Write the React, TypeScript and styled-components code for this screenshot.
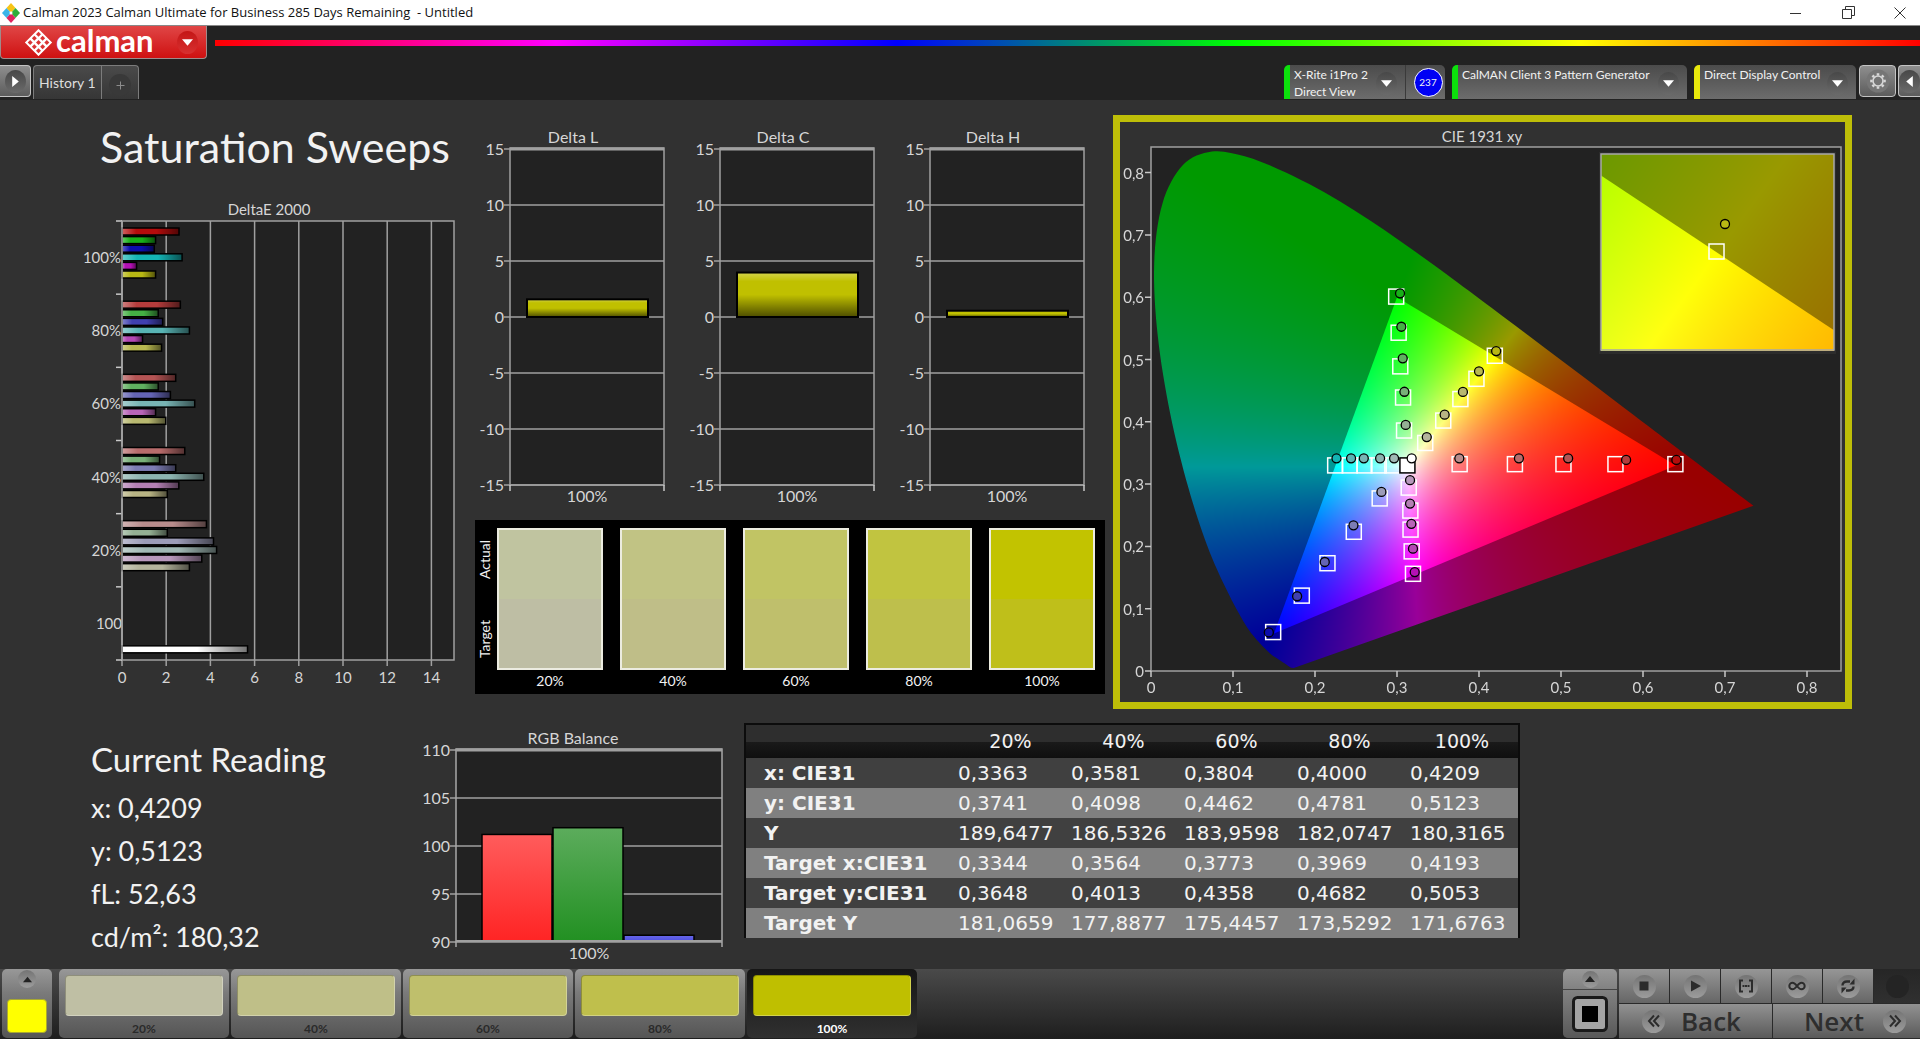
import React, { useLayoutEffect, useRef } from "react";
import styled, { createGlobalStyle, css } from "styled-components";

/* ------------------------------------------------------------------ */
/* Theme                                                               */
/* ------------------------------------------------------------------ */

const ui = '"Lato", "Open Sans", sans-serif';
const titleFont = '"Open Sans", "Noto Sans", sans-serif';
const wide = '"DejaVu Sans", "Noto Sans", sans-serif';

const GlobalStyle = createGlobalStyle`
  *, *::before, *::after { box-sizing: border-box; }
  body { margin: 0; background: #313131; font-family: ${ui}; }
  button { font: inherit; color: inherit; border: 0; padding: 0; margin: 0; cursor: pointer; }
  h1, h2, p { margin: 0; font-weight: 400; }
`;

const Page = styled.div`
  min-height: 100vh;
  display: flex;
  flex-direction: column;
  color: #f2f2f2;
  overflow-x: hidden;
`;

/* ------------------------------------------------------------------ */
/* Window title bar                                                    */
/* ------------------------------------------------------------------ */

const TitleBar = styled.header`
  height: 25px;
  flex: none;
  display: flex;
  align-items: center;
  gap: 3px;
  padding-left: 2px;
  background: #fff;
  color: #111;
  font: 13px/25px ${titleFont};
  white-space: pre;
`;

const WindowButtons = styled.div`
  margin: 0 -6px 0 auto;
  display: flex;
`;

const WindowButton = styled.button`
  width: 52px;
  height: 25px;
  display: grid;
  place-items: center;
  background: none;
`;

/* ------------------------------------------------------------------ */
/* Brand bar and tabs                                                  */
/* ------------------------------------------------------------------ */

const BrandBar = styled.div`
  height: 40px;
  flex: none;
  display: flex;
  align-items: flex-start;
  gap: 8px;
  background: #222;
  border-top: 1px solid #888;
`;

const BrandButton = styled.button`
  width: 207px;
  height: 33px;
  display: flex;
  align-items: center;
  padding: 0 8px 0 24px;
  gap: 4px;
  border: 1px solid #a08a8a;
  border-top: 0;
  border-radius: 0 0 4px 4px;
  background: linear-gradient(#e04646, #cf1111);
  color: #fff;
`;

const BrandName = styled.span`
  flex: 1;
  text-align: left;
  font-size: 31px;
  line-height: 28px;
  font-weight: 700;
  padding-bottom: 5px;
`;

const Rainbow = styled.div`
  flex: 1;
  height: 6px;
  margin-top: 14px;
  background: linear-gradient(90deg, #f00, #f0f 20%, #00f 40%, #0f0 60%, #ff0 80%, #f00);
`;

const RoundArrow = styled.span<{ $red?: boolean }>`
  width: 21px;
  height: 23px;
  flex: none;
  display: grid;
  place-items: center;
  border-radius: 50%;
  background: ${(p) => (p.$red ? "linear-gradient(#c41616, #d83030)" : "linear-gradient(#484848, #6a6a6a)")};
`;

const TabBar = styled.nav`
  height: 35px;
  flex: none;
  display: flex;
  align-items: flex-start;
  background: #222;
`;

const EdgeButton = styled.button<{ $width: number; $side?: "left" | "right" }>`
  width: ${(p) => p.$width}px;
  height: 32px;
  display: grid;
  place-items: center;
  border: 1px solid #c4c4c4;
  border-radius: 4px;
  background: linear-gradient(#8e8e8e, #5c5c5c);
  ${(p) => p.$side === "left" && css`border-left: 0; border-radius: 0 4px 4px 0;`}
  ${(p) => p.$side === "right" && css`border-right: 0; border-radius: 4px 0 0 4px;`}
`;

const Tabs = styled.div`
  display: flex;
  height: 34px;
  margin-left: 2px;
  border: 1px solid #7c7c7c;
  border-bottom: 0;
  border-radius: 4px 4px 0 0;
  background: linear-gradient(#4a4a4a, #363636);
  color: #dedede;
`;

const Tab = styled.button`
  padding: 0 5px;
  background: none;
  font-size: 14px;
  line-height: 34px;
`;

const AddTab = styled.button`
  width: 37px;
  display: grid;
  place-items: center;
  padding-top: 4px;
  border-left: 1px solid #7c7c7c;
  background: none;
`;

const Devices = styled.div`
  margin-left: auto;
  display: flex;
  align-items: flex-start;
  gap: 7px;
`;

const Device = styled.div<{ $width: number; $accent: string }>`
  width: ${(p) => p.$width}px;
  height: 34px;
  display: flex;
  border-left: 6px solid ${(p) => p.$accent};
  border-radius: 5px 5px 0 0;
  background: linear-gradient(#4b4b4b, #6c6c6c);
`;

const DeviceMenu = styled.button`
  flex: 1;
  display: flex;
  align-items: flex-start;
  justify-content: space-between;
  padding: 1px 8px 0 4px;
  background: none;
  text-align: left;
  font-size: 12px;
  line-height: 17px;
  white-space: nowrap;
`;

const ArrowSlot = styled.span`
  padding-top: 6px;
`;

const Reading = styled.div`
  width: 40px;
  display: grid;
  place-items: center;
  padding-left: 5px;
  border-left: 1px solid #3a3a3a;
`;

const ReadingBadge = styled.span`
  width: 29px;
  height: 29px;
  border: 1px solid #fff;
  border-radius: 50%;
  background: #0000f4;
  text-align: center;
  font-size: 10px;
  line-height: 27px;
`;

const EdgeGroup = styled.div`
  display: flex;
  gap: 2px;
  margin-left: -4px;
`;

/* ------------------------------------------------------------------ */
/* Work area                                                           */
/* ------------------------------------------------------------------ */

const Main = styled.main`
  flex: 1;
  background: #313131;
`;

const TopRow = styled.section`
  display: grid;
  grid-template-columns: 467fr 630fr 739fr 60fr;
  column-gap: 8px;
  align-items: start;
  padding-top: 15px;
`;

const BottomRow = styled.section`
  display: grid;
  grid-template-columns: 397fr 331fr 776fr 392fr;
  column-gap: 8px;
  align-items: start;
  padding-top: 14px;
`;

const PageTitle = styled.h1`
  padding: 7px 0 23px 100px;
  font-size: 43px;
  line-height: 50px;
  white-space: nowrap;
`;

const Plot = styled.svg<{ $text?: number }>`
  display: block;
  width: 100%;
  height: auto;
  fill: #d6d6d6;
  font-family: ${ui};
  font-size: ${(p) => p.$text ?? 16}px;
`;

const DeltaRow = styled.div`
  display: grid;
  grid-template-columns: repeat(3, 1fr);
`;

const SwatchPanel = styled.div`
  display: grid;
  grid-template-columns: 22px 1fr;
  margin-top: 12px;
  padding: 8px 10px 3px 0;
  background: #000;
`;

const SwatchSide = styled.div`
  display: flex;
  flex-direction: column;
  justify-content: space-between;
  align-items: center;
  height: 142px;
  padding: 12px 3px 12px 0;
  font-size: 14px;
  line-height: 16px;
`;

const SwatchList = styled.div`
  display: grid;
  grid-template-columns: repeat(5, 1fr);
  column-gap: 17px;
`;

const Vertical = styled.span`
  writing-mode: vertical-rl;
  transform: rotate(180deg);
`;

const Swatch = styled.figure`
  margin: 0;
  text-align: center;
  font-size: 14px;
  line-height: 21px;
`;

const SwatchColor = styled.div<{ $actual: string; $target: string }>`
  height: 142px;
  border: 2px solid #ecece0;
  background: linear-gradient(${(p) => p.$actual} 50%, ${(p) => p.$target} 50%);
`;

const CiePanel = styled.div`
  border: 7px solid #bebe08;
`;

const CurrentReading = styled.div`
  padding: 14px 0 0 91px;
  white-space: nowrap;
`;

const ReadingTitle = styled.h2`
  font-size: 33px;
  line-height: 44px;
  padding-bottom: 5px;
`;

const ReadingLine = styled.p`
  font-size: 27px;
  line-height: 43px;
`;

const Table = styled.table`
  width: 100%;
  table-layout: fixed;
  border-collapse: collapse;
  border: 2px solid #0c0c0c;
  border-bottom: 0;
  font: 20px/30px ${wide};
  white-space: nowrap;
`;

const HeadRow = styled.tr`
  background: linear-gradient(#2e2e2e 52%, #1a1a1a 52%, #0f0f0f);
  font-size: 19px;
  line-height: 33px;
`;

const HeadCell = styled.th<{ $label?: boolean }>`
  width: ${(p) => (p.$label ? "27%" : "auto")};
  padding: 0;
  font-weight: 400;
  text-align: center;
`;

const DataRow = styled.tr<{ $light: boolean }>`
  background: ${(p) => (p.$light ? "#808080" : "#404040")};
`;

const RowLabel = styled.th`
  padding: 0 0 0 18px;
  text-align: left;
  font-weight: 700;
`;

const Cell = styled.td`
  padding: 0 0 0 4px;
`;

/* ------------------------------------------------------------------ */
/* Footer                                                              */
/* ------------------------------------------------------------------ */

const Footer = styled.footer`
  height: 70px;
  flex: none;
  display: flex;
  padding-left: 2px;
  background: linear-gradient(#4a4a4a, #1e1e1e);
  color: #262626;
`;

const panelFace = "linear-gradient(#989898, #7a7a7a 35%, #555)";

const CurrentPatch = styled.button`
  width: 50px;
  height: 69px;
  margin-right: 7px;
  display: flex;
  flex-direction: column;
  align-items: center;
  justify-content: space-between;
  padding: 1px 0 5px;
  border-radius: 5px;
  background: ${panelFace};
`;

const PatchChip = styled.span`
  width: 40px;
  height: 34px;
  border: 1px solid #a8a830;
  border-radius: 4px;
  background: #ff0;
`;

const Patch = styled.button<{ $active: boolean }>`
  width: 170px;
  height: 69px;
  margin-right: 2px;
  display: flex;
  flex-direction: column;
  padding: 6px 6px 0;
  border-radius: 5px;
  background: ${(p) => (p.$active ? "linear-gradient(#161616, #303030)" : panelFace)};
  color: ${(p) => (p.$active ? "#fff" : "#2a2a2a")};
  font-size: 12px;
  line-height: 25px;
  font-weight: 700;
  text-align: center;
`;

const PatchColor = styled.span<{ $color: string }>`
  height: 41px;
  flex: none;
  border: 1px solid rgba(0, 0, 0, 0.25);
  border-right-color: rgba(255, 255, 255, 0.3);
  border-bottom-color: rgba(255, 255, 255, 0.3);
  border-radius: 4px;
  background: ${(p) => p.$color};
`;

const Controls = styled.div`
  margin-left: auto;
  display: flex;
  gap: 2px;
`;

const Levels = styled.div`
  width: 54px;
  height: 69px;
  display: flex;
  flex-direction: column;
  gap: 1px;
  border-radius: 5px;
  overflow: hidden;
  background: #444;
`;

const LevelsUp = styled.button`
  height: 20px;
  display: grid;
  place-items: center;
  background: linear-gradient(#989898, #828282);
`;

const LevelsBox = styled.button`
  flex: 1;
  display: grid;
  place-items: center;
  background: linear-gradient(#828282, #585858);
`;

const Transport = styled.div`
  width: 301px;
  display: flex;
  flex-direction: column;
  gap: 1px;
  background: #2a2a2a;
`;

const ToolRow = styled.div`
  display: grid;
  grid-template-columns: repeat(5, 50px) 1fr;
  column-gap: 1px;
  height: 34px;
`;

const ToolButton = styled.button<{ $off?: boolean }>`
  display: grid;
  place-items: center;
  background: ${(p) => (p.$off ? "linear-gradient(#262626, #303030)" : "linear-gradient(#969696, #666)")};
`;

const NavRow = styled.div`
  display: grid;
  grid-template-columns: 153px 1fr;
  column-gap: 1px;
  height: 34px;
`;

const NavButton = styled.button`
  display: flex;
  align-items: center;
  justify-content: space-between;
  padding: 0 31px 0 23px;
  background: linear-gradient(#929292, #5a5a5a);
  font: 600 26px/34px "Open Sans", sans-serif;
  color: #2e2e2e;
  &:last-child { padding: 0 14px 0 31px; }
`;

const Disc = styled.span<{ $size: number; $off?: boolean }>`
  width: ${(p) => p.$size}px;
  height: ${(p) => p.$size}px;
  display: grid;
  place-items: center;
  border-radius: 50%;
  background: ${(p) => (p.$off ? "#242424" : "linear-gradient(#747474, #9c9c9c)")};
`;

/* ------------------------------------------------------------------ */
/* Icons                                                               */
/* ------------------------------------------------------------------ */

const AppIcon = () => (
  <svg width="18" height="20" viewBox="0 0 18 20" aria-hidden="true">
    <path d="M9 0l4.500 5L9 10 4.500 5z" fill="#f6c417" />
    <path d="M4.500 5L9 10l-4.500 5L0 10z" fill="#3bb4e8" />
    <path d="M13.500 5L18 10l-4.500 5L9 10z" fill="#2fae3a" />
    <path d="M9 10l4.500 5L9 20l-4.500-5z" fill="#e0245e" />
    <path d="M9 8l1.800 2L9 12l-1.800-2z" fill="#fff" />
  </svg>
);

const BrandMark = () => {
  const cells: [number, number][] = [];
  for (let i = 0; i < 3; i++) for (let j = 0; j < 3; j++) cells.push([13 + (i - j) * 4, 5 + (i + j) * 4]);
  return (
    <svg width="27" height="27" viewBox="0 0 26 26" aria-hidden="true">
      <path d="M13 0.500L25.500 13 13 25.500 0.500 13z" fill="#fff" stroke="#fff" strokeLinejoin="round" />
      {cells.map(([x, y]) => (
        <path key={`${x}-${y}`} d={`M${x} ${y - 2.4}l2.400 2.400-2.400 2.400-2.400-2.400z`} fill="#da3434" />
      ))}
    </svg>
  );
};

const Triangle = ({ dir, color = "#fff", size = 10 }: { dir: "up" | "down" | "left" | "right"; color?: string; size?: number }) => {
  const d = { down: "M0 2h10L5 8z", up: "M0 8h10L5 2z", right: "M2 0v10l6-5z", left: "M8 0v10L2 5z" }[dir];
  return (
    <svg width={size} height={size} viewBox="0 0 10 10" aria-hidden="true">
      <path d={d} fill={color} />
    </svg>
  );
};

const Gear = () => (
  <svg width="24" height="24" viewBox="-3 -3 24 24" fill="none" stroke="#d8d8d8" aria-hidden="true">
    <circle cx="9" cy="9" r="11.500" fill="#767676" stroke="none" />
    <circle cx="9" cy="9" r="5" strokeWidth="1.600" />
    {[0, 45, 90, 135, 180, 225, 270, 315].map((a) => (
      <path key={a} d="M9 3.500V1.200" strokeWidth="2.600" transform={`rotate(${a} 9 9)`} />
    ))}
  </svg>
);

const Glyph = ({ name }: { name: string }) => (
  <svg width="18" height="16" viewBox="0 0 18 16" fill="none" stroke="#2c2c2c" strokeWidth="2" aria-hidden="true">
    {name === "Stop" && <path d="M4.500 3.500h9v9h-9z" fill="#2c2c2c" stroke="none" />}
    {name === "Play" && <path d="M5 2.500l10 5.500-10 5.500z" fill="#2c2c2c" stroke="none" />}
    {name === "Range" && (
      <>
        <path d="M6 2.500H3v11h3M12 2.500h3v11h-3" />
        <path d="M5.500 8h2M8 8h2M10.500 8h2" />
      </>
    )}
    {name === "Loop" && (
      <path d="M9 8C7 5.400 6 4.700 4.600 4.700a3.300 3.300 0 0 0 0 6.600C6 11.300 7 10.600 9 8c2-2.600 3-3.300 4.400-3.300a3.300 3.300 0 0 1 0 6.600C12 11.300 11 10.600 9 8z" />
    )}
    {name === "Refresh" && (
      <>
        <path d="M3.500 7.500C3.500 4.500 5.500 3.500 8 3.500h3M14.500 8.500c0 3-2 4-4.500 4H7" strokeWidth="2.400" />
        <path d="M10.500 6.500h5v-6zM7.500 9.500h-5v6z" fill="#2c2c2c" stroke="none" />
      </>
    )}
    {name === "Back" && <path d="M9 2.500L4 8l5 5.500M14 2.500L9 8l5 5.500" />}
    {name === "Next" && <path d="M4 2.500L9 8l-5 5.500M9 2.500L14 8l-5 5.500" />}
  </svg>
);

/* ------------------------------------------------------------------ */
/* DeltaE 2000 chart                                                   */
/* ------------------------------------------------------------------ */

type Bar = [value: number, color: string];

const deltaE: { label: string; bars: Bar[] }[] = [
  { label: "100%", bars: [[2.58, "#b40c0c"], [1.52, "#18b018"], [1.46, "#0c0cac"], [2.72, "#14b4b4"], [0.66, "#b410b4"], [1.52, "#b8b814"]] },
  { label: "80%", bars: [[2.64, "#b43c3c"], [1.64, "#44b044"], [1.84, "#4040b0"], [3.05, "#58b4b4"], [0.93, "#b448b4"], [1.79, "#b8b850"]] },
  { label: "60%", bars: [[2.43, "#b45454"], [1.64, "#60b060"], [2.19, "#6464b4"], [3.29, "#78b4b4"], [1.52, "#b864b8"], [1.98, "#b8b870"]] },
  { label: "40%", bars: [[2.84, "#b86c6c"], [1.7, "#78b078"], [2.43, "#7c7cb4"], [3.7, "#8cb4b0"], [2.57, "#b480b4"], [2.05, "#b8b484"]] },
  { label: "20%", bars: [[3.82, "#b88c8c"], [2.05, "#94b094"], [4.14, "#9c9cb8"], [4.28, "#a0b8b4"], [3.61, "#b898bc"], [3.05, "#b4b49c"]] },
];

const GlossH = () => (
  <linearGradient id="gloss-h">
    <stop offset="0" stopColor="#fff" stopOpacity="0.35" />
    <stop offset="0.25" stopColor="#fff" stopOpacity="0" />
    <stop offset="0.6" stopColor="#000" stopOpacity="0" />
    <stop offset="1" stopColor="#000" stopOpacity="0.55" />
  </linearGradient>
);

const DeltaEChart = () => {
  const left = 122;
  const right = 454;
  const top = 26;
  const bottom = 465;
  const unit = 22.1;
  const step = (bottom - top) / 6;
  const bar = (y: number, [value, color]: Bar) => (
    <g key={y}>
      <rect x={left} y={y} width={value * unit} height={7} fill={color} />
      <rect x={left} y={y} width={value * unit} height={7} fill="url(#gloss-h)" stroke="#000" strokeWidth="1.500" />
    </g>
  );
  return (
    <Plot $text={15} viewBox="0 0 467 510" role="img" aria-label="DeltaE 2000">
      <defs>
        <GlossH />
      </defs>
      <text x="269" y="20" textAnchor="middle">DeltaE 2000</text>
      <rect x={left} y={top} width={right - left} height={bottom - top} fill="#222" stroke="#a0a0a0" strokeWidth="1.500" />
      {[0, 2, 4, 6, 8, 10, 12, 14].map((v) => (
        <g key={v}>
          <path d={`M${left + v * unit} ${top}V${bottom + 6}`} stroke="#a0a0a0" strokeWidth="1.500" />
          <text x={left + v * unit} y="488" textAnchor="middle">{v}</text>
        </g>
      ))}
      {[0, 1, 2, 3, 4, 5, 6].map((i) => (
        <path key={i} d={`M${left - 6} ${top + i * step}h6`} stroke="#c8c8c8" strokeWidth="1.500" />
      ))}
      {deltaE.map((group, g) => (
        <g key={group.label}>
          <text x={left - 1} y={top + g * step + 42} textAnchor="end">{group.label}</text>
          {group.bars.map((b, i) => bar(top + g * step + 7 + i * 8.6, b))}
        </g>
      ))}
      <text x={left} y={top + 5 * step + 42} textAnchor="end">100</text>
      {bar(top + 5 * step + 59, [5.68, "#ffffff"])}
      <path d={`M${left} ${top}V${bottom}`} stroke="#a0a0a0" strokeWidth="1.500" />
    </Plot>
  );
};

/* ------------------------------------------------------------------ */
/* Delta L / C / H charts                                              */
/* ------------------------------------------------------------------ */

const DeltaChart = ({ name, value }: { name: string; value: number }) => {
  const left = 35;
  const right = 189;
  const top = 33;
  const step = 56;
  const zero = top + 3 * step + 1;
  const h = value * 11.4;
  return (
    <Plot viewBox="0 0 210 393" role="img" aria-label={name}>
      <defs>
        <linearGradient id="gloss-v" x2="0" y2="1">
          <stop offset="0" stopColor="#fff" stopOpacity="0.3" />
          <stop offset="0.2" stopColor="#fff" stopOpacity="0" />
          <stop offset="0.5" stopColor="#000" stopOpacity="0" />
          <stop offset="1" stopColor="#000" stopOpacity="0.6" />
        </linearGradient>
      </defs>
      <text x="98" y="28" textAnchor="middle">{name}</text>
      <rect x={left} y={top} width={right - left} height={step * 6 + 1} fill="#222" stroke="#a0a0a0" strokeWidth="1.500" />
      <path d={`M${left} ${top + 1}H${right}`} stroke="#a0a0a0" strokeWidth="3" />
      {[15, 10, 5, 0, -5, -10, -15].map((v, i) => (
        <g key={v}>
          <path d={`M${left - 6} ${top + i * step + 1}H${right}`} stroke="#a0a0a0" strokeWidth="1.500" />
          <text x={left - 6} y={top + i * step + 7} textAnchor="end">{v}</text>
        </g>
      ))}
      <path d={`M${left} 370v6M${right} 370v6`} stroke="#c8c8c8" strokeWidth="1.500" />
      <rect x="52" y={zero - h} width="121" height={h} fill="#c0c000" />
      <rect x="52" y={zero - h} width="121" height={h} fill="url(#gloss-v)" stroke="#000" strokeWidth="2" />
      <text x="112" y="387" textAnchor="middle">100%</text>
    </Plot>
  );
};

/* ------------------------------------------------------------------ */
/* RGB balance                                                         */
/* ------------------------------------------------------------------ */

const RgbChart = () => {
  const left = 51;
  const right = 317;
  const top = 26;
  const bottom = 218;
  const bars = [
    { x: 77, value: 101.1, from: "#ff5c5c", to: "#ff2424" },
    { x: 148, value: 101.8, from: "#5cac5c", to: "#229022" },
    { x: 219, value: 90.6, from: "#6868e8", to: "#5050e0" },
  ];
  return (
    <Plot viewBox="0 0 331 245" role="img" aria-label="RGB Balance">
      <defs>
        {bars.map((b) => (
          <linearGradient key={b.x} id={`rgb-${b.x}`} x2="0" y2="1">
            <stop offset="0" stopColor={b.from} />
            <stop offset="1" stopColor={b.to} />
          </linearGradient>
        ))}
      </defs>
      <text x="168" y="21" textAnchor="middle">RGB Balance</text>
      <rect x={left} y={top} width={right - left} height={bottom - top} fill="#222" />
      {[110, 105, 100, 95, 90].map((v, i) => (
        <g key={v}>
          <path d={`M${left - 6} ${top + i * 48 + 1}H${right}`} stroke="#a0a0a0" strokeWidth="1.500" />
          <text x={left - 6} y={top + i * 48 + 7} textAnchor="end">{v}</text>
        </g>
      ))}
      {bars.map((b) => {
        const h = (b.value - 90) * 9.6;
        return <rect key={b.x} x={b.x} y={bottom - h} width="70" height={h} fill={`url(#rgb-${b.x})`} stroke="#000" strokeWidth="1.500" />;
      })}
      <path d={`M${left} ${bottom + 6}V${top}H${right}V${bottom + 6}`} fill="none" stroke="#a8a8a8" strokeWidth="1.500" />
      <path d={`M${left} ${top + 1}H${right}`} stroke="#a0a0a0" strokeWidth="3" />
      <path d={`M${left} ${bottom}H${right}`} stroke="#a0a0a0" strokeWidth="2" />
      <text x="184" y="236" textAnchor="middle">100%</text>
    </Plot>
  );
};

/* ------------------------------------------------------------------ */
/* CIE 1931 chromaticity diagram                                       */
/* ------------------------------------------------------------------ */

type XY = [number, number];

const locus: XY[] = [
  [0.1741, 0.005], [0.1714, 0.0051], [0.1689, 0.0069], [0.1644, 0.0109], [0.1566, 0.0177], [0.144, 0.0297],
  [0.1241, 0.0578], [0.1096, 0.0868], [0.0913, 0.1327], [0.0687, 0.2007], [0.0454, 0.295], [0.0235, 0.4127],
  [0.0082, 0.5384], [0.0039, 0.6548], [0.0139, 0.7502], [0.0389, 0.812], [0.0743, 0.8338], [0.1142, 0.8262],
  [0.1547, 0.8059], [0.1929, 0.7816], [0.2296, 0.7543], [0.2658, 0.7243], [0.3016, 0.6923], [0.3373, 0.6589],
  [0.3731, 0.6245], [0.4441, 0.5547], [0.5125, 0.4866], [0.5752, 0.4242], [0.627, 0.3725], [0.6915, 0.3083],
  [0.7347, 0.2653],
];

const gamut: XY[] = [[0.64, 0.33], [0.3, 0.6], [0.15, 0.06]];

const targets: XY[] = [
  [0.299, 0.601], [0.302, 0.543], [0.304, 0.489], [0.3074, 0.439], [0.3086, 0.386],
  [0.4193, 0.506], [0.3969, 0.469], [0.3773, 0.4365], [0.3564, 0.402], [0.3344, 0.366],
  [0.2246, 0.33], [0.2424, 0.33], [0.2603, 0.33], [0.2777, 0.33], [0.2944, 0.33],
  [0.2789, 0.277], [0.2473, 0.2235], [0.2152, 0.173], [0.1839, 0.121], [0.149, 0.0625],
  [0.3143, 0.2944], [0.3163, 0.2575], [0.3165, 0.227], [0.3179, 0.192], [0.3195, 0.156],
  [0.3764, 0.332], [0.4438, 0.332], [0.503, 0.332], [0.5664, 0.332], [0.6395, 0.332],
];

const readings: [number, number, string][] = [
  [0.3037, 0.6063, "#18b018"], [0.3053, 0.5526, "#44b044"], [0.307, 0.5019, "#60b060"], [0.309, 0.4482, "#78b078"], [0.3106, 0.395, "#94b094"],
  [0.4209, 0.5135, "#b8b814"], [0.4, 0.481, "#b8b850"], [0.3804, 0.448, "#b8b870"], [0.3581, 0.4115, "#b8b484"], [0.3363, 0.3755, "#b4b49c"],
  [0.2262, 0.3413, "#14b4b4"], [0.244, 0.3413, "#58b4b4"], [0.2595, 0.3413, "#78b4b4"], [0.2794, 0.3413, "#8cb4b0"], [0.2964, 0.3413, "#a0b8b4"],
  [0.281, 0.2875, "#9c9cb8"], [0.2469, 0.2338, "#7c7cb4"], [0.2119, 0.175, "#6464b4"], [0.1782, 0.12, "#4040b0"], [0.1437, 0.0619, "#0c0cac"],
  [0.3159, 0.3063, "#b898bc"], [0.3159, 0.2688, "#b480b4"], [0.3175, 0.2363, "#b864b8"], [0.3195, 0.1963, "#b448b4"], [0.3216, 0.1588, "#b410b4"],
  [0.376, 0.3413, "#b88c8c"], [0.4487, 0.3413, "#b86c6c"], [0.5087, 0.3413, "#b45454"], [0.5794, 0.3388, "#b43c3c"], [0.6407, 0.3388, "#b40c0c"],
  [0.3179, 0.3413, "#ffffff"],
];

interface Scale {
  x0: number;
  y0: number;
  sx: number;
  sy: number;
}

/* Fully saturated display colour of a chromaticity, out-of-gamut channels clipped. */
const chroma = (x: number, y: number): number[] => {
  const X = x / y;
  const Z = (1 - x - y) / y;
  const rgb = [
    3.2406 * X - 1.5372 - 0.4986 * Z,
    -0.9689 * X + 1.8758 + 0.0415 * Z,
    0.0557 * X - 0.204 + 1.057 * Z,
  ].map((c) => Math.max(0, c));
  const max = Math.max(...rgb);
  return rgb.map((c) => (c / max) * 255);
};

const smooth = (ctx: CanvasRenderingContext2D, pts: XY[]) => {
  ctx.beginPath();
  ctx.moveTo(...pts[0]);
  for (let i = 0; i < pts.length - 1; i++) {
    const a = pts[Math.max(0, i - 1)];
    const b = pts[i];
    const c = pts[i + 1];
    const d = pts[Math.min(pts.length - 1, i + 2)];
    ctx.bezierCurveTo(b[0] + (c[0] - a[0]) / 6, b[1] + (c[1] - a[1]) / 6, c[0] - (d[0] - b[0]) / 6, c[1] - (d[1] - b[1]) / 6, c[0], c[1]);
  }
  ctx.closePath();
};

const GamutSheet = styled.canvas`
  display: block;
`;

const GamutCanvas = ({ width, height, scale }: { width: number; height: number; scale: Scale }) => {
  const ref = useRef<HTMLCanvasElement>(null);
  useLayoutEffect(() => {
    const ctx = ref.current?.getContext("2d");
    if (!ctx) return;
    const at = ([x, y]: XY): XY => [(x - scale.x0) * scale.sx, height - (y - scale.y0) * scale.sy];
    const layer = (level: number) => {
      const sheet = document.createElement("canvas");
      sheet.width = width;
      sheet.height = height;
      const sctx = sheet.getContext("2d")!;
      const image = sctx.createImageData(width, height);
      for (let py = 0; py < height; py++) {
        for (let px = 0; px < width; px++) {
          const x = scale.x0 + px / scale.sx;
          const y = Math.max(0.001, scale.y0 + (height - py) / scale.sy);
          const rgb = chroma(x, y);
          const o = (py * width + px) * 4;
          for (let k = 0; k < 3; k++) image.data[o + k] = rgb[k] * level;
          image.data[o + 3] = 255;
        }
      }
      sctx.putImageData(image, 0, 0);
      return sheet;
    };
    ctx.clearRect(0, 0, width, height);
    ctx.save();
    smooth(ctx, locus.map(at));
    ctx.clip();
    ctx.drawImage(layer(0.6), 0, 0);
    ctx.restore();
    ctx.save();
    ctx.beginPath();
    gamut.map(at).forEach((p, i) => (i ? ctx.lineTo(...p) : ctx.moveTo(...p)));
    ctx.closePath();
    ctx.clip();
    ctx.drawImage(layer(1), 0, 0);
    ctx.restore();
  }, [width, height, scale]);
  return <GamutSheet ref={ref} width={width} height={height} />;
};

const mainScale: Scale = { x0: 0, y0: 0, sx: 820, sy: 623 };
const insetScale: Scale = { x0: 0.3957, y0: 0.4812, sx: 4900, sy: 4100 };

const CieChart = () => {
  const left = 31;
  const top = 25;
  const width = 690;
  const height = 524;
  const bottom = top + height;
  const px = (x: number) => left + x * mainScale.sx;
  const py = (y: number) => bottom - y * mainScale.sy;
  const comma = (v: number) => (v === 0 ? "0" : v.toFixed(1).replace(".", ","));
  return (
    <Plot $text={15} viewBox="0 0 725 580" role="img" aria-label="CIE 1931 xy">
      <text x="362" y="20" textAnchor="middle">CIE 1931 xy</text>
      <rect x={left} y={top} width={width} height={height} fill="#222" />
      <foreignObject x={left} y={top} width={width} height={height}>
        <GamutCanvas width={width} height={height} scale={mainScale} />
      </foreignObject>
      <rect x={left} y={top} width={width} height={height} fill="none" stroke="#a0a0a0" strokeWidth="1.500" />
      {[0, 0.1, 0.2, 0.3, 0.4, 0.5, 0.6, 0.7, 0.8].map((v) => (
        <g key={v}>
          <path d={`M${px(v)} ${bottom}v6M${left - 6} ${py(v)}h6`} stroke="#c8c8c8" strokeWidth="1.500" />
          <text x={px(v)} y="571" textAnchor="middle">{comma(v)}</text>
          <text x={left - 7} y={py(v) + 6} textAnchor="end">{comma(v)}</text>
        </g>
      ))}
      {targets.map(([x, y], i) => (
        <rect key={i} x={px(x) - 7.5} y={py(y) - 7.5} width="15" height="15" fill="none" stroke="#fff" strokeWidth="1.500" />
      ))}
      <rect x={px(0.3127) - 7.5} y={py(0.33) - 7.5} width="15" height="15" fill="#fff" stroke="#000" strokeWidth="1.500" />
      {readings.map(([x, y, c], i) => (
        <circle key={i} cx={px(x)} cy={py(y)} r="4.500" fill={c} stroke="#000" strokeWidth="1.300" />
      ))}
      <rect x="479" y="30" width="237" height="202" fill="#2c2c2c" />
      <foreignObject x="481" y="32" width="233" height="197">
        <GamutCanvas width={233} height={197} scale={insetScale} />
      </foreignObject>
      <rect x="481" y="32" width="233" height="196" fill="none" stroke="#a8a8a8" strokeWidth="1.500" />
      <rect x="589" y="122" width="15" height="15" fill="none" stroke="#fff" strokeWidth="1.500" />
      <circle cx="605" cy="102" r="4.500" fill="#b8b814" stroke="#000" strokeWidth="1.300" />
    </Plot>
  );
};

/* ------------------------------------------------------------------ */
/* Page                                                                */
/* ------------------------------------------------------------------ */

const levels = ["20%", "40%", "60%", "80%", "100%"];

const swatches = [
  { actual: "#c0c4a0", target: "#bebea4" },
  { actual: "#c1c384", target: "#bfbe88" },
  { actual: "#c1c464", target: "#bfbf6c" },
  { actual: "#c1c440", target: "#bebf4c" },
  { actual: "#c2c300", target: "#bfbf1a" },
];

const patches = ["#bfbfa4", "#bfbf88", "#bfbf6c", "#bfbf4c", "#bfbf00"];

const rows = [
  { label: "x: CIE31", values: ["0,3363", "0,3581", "0,3804", "0,4000", "0,4209"] },
  { label: "y: CIE31", values: ["0,3741", "0,4098", "0,4462", "0,4781", "0,5123"] },
  { label: "Y", values: ["189,6477", "186,5326", "183,9598", "182,0747", "180,3165"] },
  { label: "Target x:CIE31", values: ["0,3344", "0,3564", "0,3773", "0,3969", "0,4193"] },
  { label: "Target y:CIE31", values: ["0,3648", "0,4013", "0,4358", "0,4682", "0,5053"] },
  { label: "Target Y", values: ["181,0659", "177,8877", "175,4457", "173,5292", "171,6763"] },
];

export default function App() {
  return (
    <Page>
      <GlobalStyle />
      <TitleBar>
        <AppIcon />
        <span>Calman 2023 Calman Ultimate for Business 285 Days Remaining  - Untitled</span>
        <WindowButtons>
          <WindowButton aria-label="Minimize">
            <svg width="12" height="12"><path d="M0 6.500h11" stroke="#333" /></svg>
          </WindowButton>
          <WindowButton aria-label="Restore">
            <svg width="13" height="13" fill="none" stroke="#333"><path d="M0.500 3.500h9v9h-9zM3.500 3V0.500h9v9H10" /></svg>
          </WindowButton>
          <WindowButton aria-label="Close">
            <svg width="12" height="12" stroke="#333"><path d="M0.500 0.500l11 11M11.500 0.500l-11 11" /></svg>
          </WindowButton>
        </WindowButtons>
      </TitleBar>

      <BrandBar>
        <BrandButton>
          <BrandMark />
          <BrandName>calman</BrandName>
          <RoundArrow $red><Triangle dir="down" size={11} /></RoundArrow>
        </BrandButton>
        <Rainbow />
      </BrandBar>

      <TabBar>
        <EdgeButton $width={31} $side="left" aria-label="Expand">
          <RoundArrow><Triangle dir="right" size={11} /></RoundArrow>
        </EdgeButton>
        <Tabs>
          <Tab>History 1</Tab>
          <AddTab aria-label="Add tab">
            <svg width="22" height="22"><circle cx="11" cy="11" r="11" fill="#393939" /><path d="M7.500 11.500h8M11.500 7.500v8" stroke="#8c8c8c" /></svg>
          </AddTab>
        </Tabs>
        <Devices>
          <Device $width={161} $accent="#0ce00c">
            <DeviceMenu>
              <span>X-Rite i1Pro 2<br />Direct View</span>
              <ArrowSlot><RoundArrow><Triangle dir="down" size={11} /></RoundArrow></ArrowSlot>
            </DeviceMenu>
            <Reading><ReadingBadge>237</ReadingBadge></Reading>
          </Device>
          <Device $width={235} $accent="#0ce00c">
            <DeviceMenu>
              <span>CalMAN Client 3 Pattern Generator</span>
              <ArrowSlot><RoundArrow><Triangle dir="down" size={11} /></RoundArrow></ArrowSlot>
            </DeviceMenu>
          </Device>
          <Device $width={162} $accent="#e8e80c">
            <DeviceMenu>
              <span>Direct Display Control</span>
              <ArrowSlot><RoundArrow><Triangle dir="down" size={11} /></RoundArrow></ArrowSlot>
            </DeviceMenu>
          </Device>
          <EdgeGroup>
            <EdgeButton $width={37} aria-label="Settings"><Gear /></EdgeButton>
            <EdgeButton $width={22} $side="right" aria-label="Collapse">
              <RoundArrow><Triangle dir="left" size={11} /></RoundArrow>
            </EdgeButton>
          </EdgeGroup>
        </Devices>
      </TabBar>

      <Main>
        <TopRow>
          <div>
            <PageTitle>Saturation Sweeps</PageTitle>
            <DeltaEChart />
          </div>
          <div>
            <DeltaRow>
              <DeltaChart name="Delta L" value={1.55} />
              <DeltaChart name="Delta C" value={3.9} />
              <DeltaChart name="Delta H" value={0.55} />
            </DeltaRow>
            <SwatchPanel>
              <SwatchSide>
                <Vertical>Actual</Vertical>
                <Vertical>Target</Vertical>
              </SwatchSide>
              <SwatchList>
                {swatches.map((s, i) => (
                  <Swatch key={levels[i]}>
                    <SwatchColor $actual={s.actual} $target={s.target} />
                    <figcaption>{levels[i]}</figcaption>
                  </Swatch>
                ))}
              </SwatchList>
            </SwatchPanel>
          </div>
          <CiePanel>
            <CieChart />
          </CiePanel>
        </TopRow>

        <BottomRow>
          <CurrentReading>
            <ReadingTitle>Current Reading</ReadingTitle>
            <ReadingLine>x: 0,4209</ReadingLine>
            <ReadingLine>y: 0,5123</ReadingLine>
            <ReadingLine>fL: 52,63</ReadingLine>
            <ReadingLine>cd/m²: 180,32</ReadingLine>
          </CurrentReading>
          <RgbChart />
          <Table>
            <thead>
              <HeadRow>
                <HeadCell $label />
                {levels.map((l) => <HeadCell key={l}>{l}</HeadCell>)}
              </HeadRow>
            </thead>
            <tbody>
              {rows.map((r, i) => (
                <DataRow key={r.label} $light={i % 2 === 1}>
                  <RowLabel scope="row">{r.label}</RowLabel>
                  {r.values.map((v) => <Cell key={v}>{v}</Cell>)}
                </DataRow>
              ))}
            </tbody>
          </Table>
        </BottomRow>
      </Main>

      <Footer>
        <CurrentPatch aria-label="Current patch">
          <Disc $size={18}><Triangle dir="up" color="#222" size={9} /></Disc>
          <PatchChip />
        </CurrentPatch>
        {patches.map((color, i) => (
          <Patch key={color} $active={i === 4}>
            <PatchColor $color={color} />
            {levels[i]}
          </Patch>
        ))}
        <Controls>
          <Levels>
            <LevelsUp aria-label="Previous level"><Disc $size={17}><Triangle dir="up" color="#222" size={10} /></Disc></LevelsUp>
            <LevelsBox aria-label="Window pattern">
              <svg width="36" height="36">
                <rect x="1.500" y="1.500" width="33" height="33" rx="4" fill="#a4a4a4" stroke="#1a1a1a" strokeWidth="3" />
                <path d="M10 10h16v16H10z" fill="#000" />
              </svg>
            </LevelsBox>
          </Levels>
          <Transport>
            <ToolRow>
              {["Stop", "Play", "Range", "Loop", "Refresh"].map((name) => (
                <ToolButton key={name} aria-label={name}>
                  <Disc $size={23}><Glyph name={name} /></Disc>
                </ToolButton>
              ))}
              <ToolButton $off aria-label="Record"><Disc $size={23} $off /></ToolButton>
            </ToolRow>
            <NavRow>
              <NavButton><Disc $size={23}><Glyph name="Back" /></Disc>Back</NavButton>
              <NavButton>Next<Disc $size={23}><Glyph name="Next" /></Disc></NavButton>
            </NavRow>
          </Transport>
        </Controls>
      </Footer>
    </Page>
  );
}
